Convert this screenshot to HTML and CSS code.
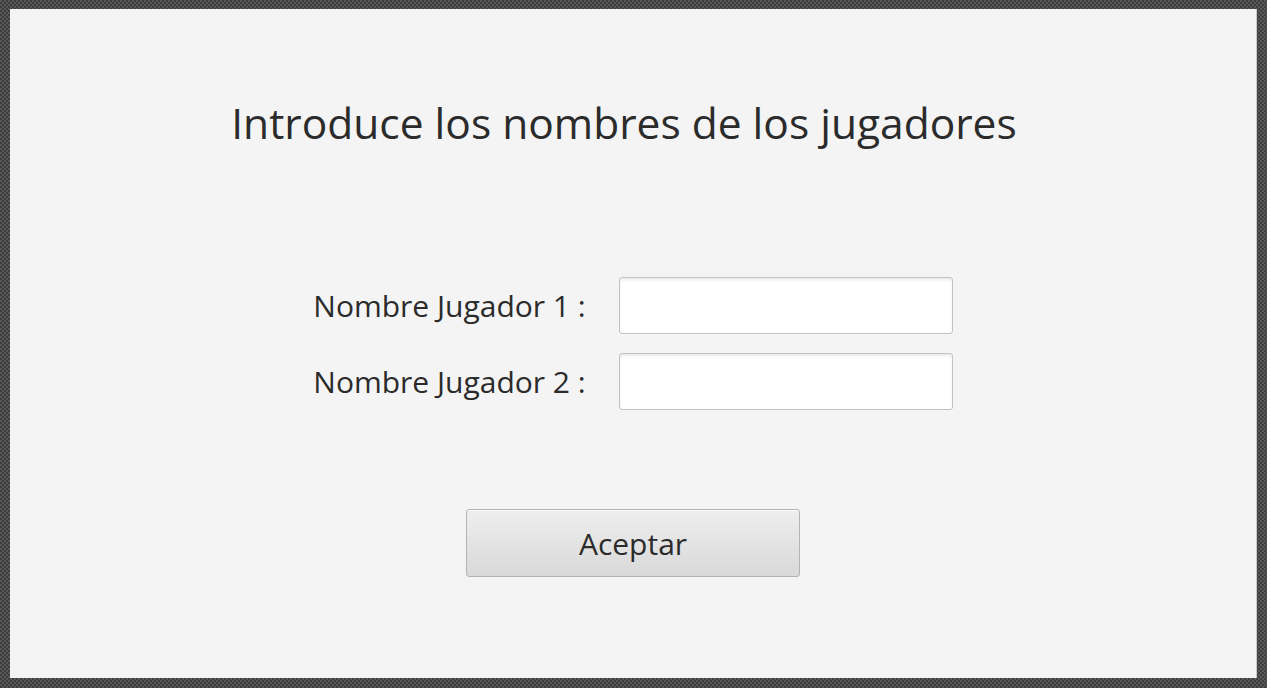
FILE: index.html
```html
<!DOCTYPE html>
<html lang="es">
<head>
<meta charset="utf-8">
<title>Jugadores</title>
<link rel="stylesheet" href="styles.css">
</head>
<body>
<main class="panel">
  <h1 class="title">Introduce los nombres de los jugadores</h1>
  <form class="form">
    <label class="label" for="j1">Nombre Jugador 1 :</label>
    <input class="field" id="j1" type="text">
    <label class="label" for="j2">Nombre Jugador 2 :</label>
    <input class="field" id="j2" type="text">
  </form>
  <button class="btn" type="button">Aceptar</button>
</main>
</body>
</html>
```
FILE: styles.css
```css
html, body {
  margin: 0;
  height: 100%;
}
body {
  box-sizing: border-box;
  padding: 9px 11px 10px 10px;
  background-color: #4a4a4a;
  background-image: repeating-conic-gradient(#3e3e3e 0 25%, #575757 0 50%);
  background-size: 4px 4px;
  font-family: "Open Sans", "Noto Sans", sans-serif;
  color: #2b2b2b;
}
.panel {
  height: 100%;
  background: #f4f4f4;
  box-shadow: 1px 0 0 #c8c8c8;
  display: flex;
  flex-direction: column;
  align-items: center;
}
.title {
  margin: 79px 18px 0 0;
  font-size: 42.5px;
  font-weight: 400;
  line-height: 70px;
  color: #2b2b2b;
}
.form {
  margin-top: 119px;
  display: grid;
  grid-template-columns: auto 334px;
  column-gap: 33px;
  row-gap: 19px;
  align-items: center;
}
.label {
  font-size: 30px;
  line-height: 40px;
  color: #2b2b2b;
}
.field {
  box-sizing: border-box;
  height: 57px;
  margin: 0;
  border: 1px solid #c2c2c2;
  border-radius: 3px;
  background: #fff;
  box-shadow: inset 0 3px 4px -2px rgba(0,0,0,0.12);
  font: inherit;
  font-size: 24px;
  padding: 0 10px;
  outline: none;
}
.btn {
  margin-top: 99px;
  box-sizing: border-box;
  width: 334px;
  height: 68px;
  border: 1px solid #b4b4b4;
  border-radius: 3px;
  background: linear-gradient(#eeeeee, #d9d9d9);
  box-shadow: inset 0 1px 0 #fafafa;
  font-family: inherit;
  font-size: 30px;
  color: #2b2b2b;
  padding: 0;
}
```
